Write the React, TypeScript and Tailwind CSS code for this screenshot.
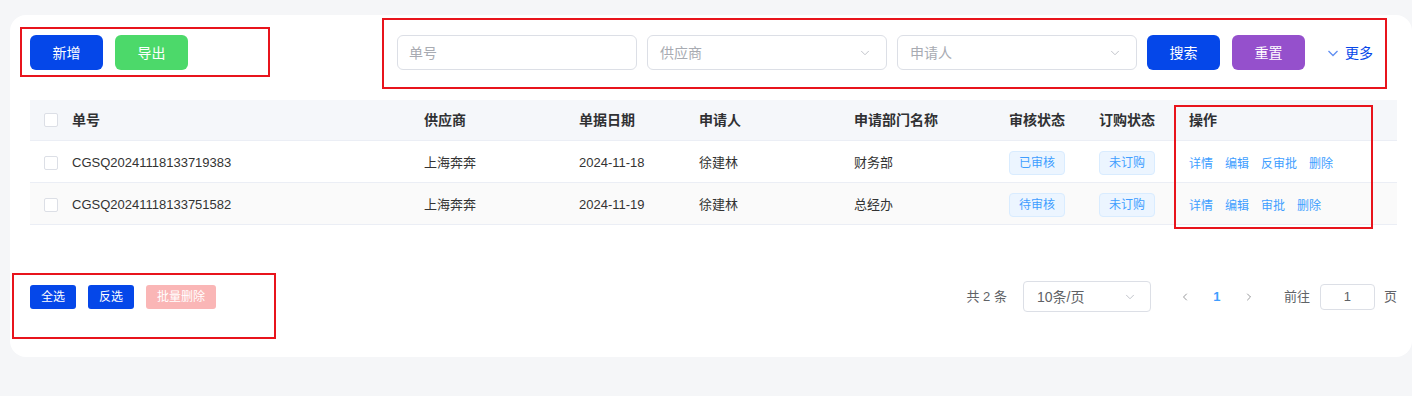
import { ChevronDown, ChevronLeft, ChevronRight } from "lucide-react";

const rows = [
  { no: "CGSQ20241118133719383", supplier: "上海奔奔", date: "2024-11-18", user: "徐建林", dept: "财务部", audit: "已审核", order: "未订购", ops: ["详情", "编辑", "反审批", "删除"] },
  { no: "CGSQ20241118133751582", supplier: "上海奔奔", date: "2024-11-19", user: "徐建林", dept: "总经办", audit: "待审核", order: "未订购", ops: ["详情", "编辑", "审批", "删除"] },
];

const cols = "grid grid-cols-[42px_352px_155px_120px_155px_155px_90px_90px_1fr] items-center";

const Checkbox = () => (
  <span className="ml-[14px] block h-[14px] w-[14px] rounded-[2px] border border-[#dcdfe6] bg-white" />
);

const Tag = ({ text }: { text: string }) => (
  <span className="flex h-6 w-14 items-center justify-center rounded border border-[#d9ecff] bg-[#ecf5ff] text-xs text-[#409eff]">
    {text}
  </span>
);

const SelectBox = ({ placeholder }: { placeholder: string }) => (
  <div className="flex h-[35px] w-[240px] items-center justify-between rounded-md border border-[#dcdfe6] bg-white pl-3 pr-[14px] text-sm text-[#a8abb2]">
    <span>{placeholder}</span>
    <ChevronDown className="h-[14px] w-[14px] text-[#b8bbc2]" strokeWidth={1.5} />
  </div>
);

export default function App() {
  return (
    <div className="relative h-[396px] w-full overflow-hidden bg-[#f5f6f8] pl-[10px] pt-[15px] font-['Liberation_Sans','Noto_Sans_CJK_SC',sans-serif]">
      <div className="rounded-2xl bg-white pb-[45px] pl-5 pr-[15px] pt-5">
        {/* Toolbar */}
        <div className="flex items-center justify-between">
          <div className="flex gap-3">
            <button className="h-[35px] w-[73px] rounded-md bg-[#0547e9] text-sm text-white">新增</button>
            <button className="h-[35px] w-[73px] rounded-md bg-[#4cd96a] text-sm text-white">导出</button>
          </div>
          <div className="mr-6 flex items-center">
            <div className="flex h-[35px] w-[240px] items-center rounded-md border border-[#dcdfe6] bg-white pl-[11px] text-sm text-[#a8abb2]">
              单号
            </div>
            <div className="ml-[10px]"><SelectBox placeholder="供应商" /></div>
            <div className="ml-[10px]"><SelectBox placeholder="申请人" /></div>
            <button className="ml-[10px] h-[35px] w-[73px] rounded-md bg-[#0547e9] text-sm text-white">搜索</button>
            <button className="ml-3 h-[35px] w-[73px] rounded-md bg-[#9550cc] text-sm text-white">重置</button>
            <button className="ml-[22px] flex items-center gap-[6px] text-sm text-[#0547e9]">
              <svg width="12" height="12" viewBox="0 0 12 12" fill="none" stroke="#5f8ef2" strokeWidth="1.3">
                <polyline points="1.5,4 6,8.5 10.5,4" />
              </svg>
              更多
            </button>
          </div>
        </div>

        {/* Table */}
        <div className="mt-[30px] text-[13px] text-[#333]">
          <div className={`${cols} h-[41px] border-b border-[#ebeef5] bg-[#f5f7fa] text-sm font-bold text-[#303133]`}>
            <Checkbox />
            <span>单号</span>
            <span>供应商</span>
            <span>单据日期</span>
            <span>申请人</span>
            <span>申请部门名称</span>
            <span>审核状态</span>
            <span>订购状态</span>
            <span>操作</span>
          </div>
          {rows.map((r, i) => (
            <div
              key={r.no}
              className={`${cols} h-[42px] border-b border-[#ebeef5] pt-[2px] ${i % 2 === 1 ? "bg-[#fafafa]" : "bg-white"}`}
            >
              <Checkbox />
              <span>{r.no}</span>
              <span>{r.supplier}</span>
              <span>{r.date}</span>
              <span>{r.user}</span>
              <span>{r.dept}</span>
              <span><Tag text={r.audit} /></span>
              <span><Tag text={r.order} /></span>
              <span className="flex gap-3 pt-[2px] text-xs text-[#409eff]">
                {r.ops.map((op) => (
                  <button key={op}>{op}</button>
                ))}
              </span>
            </div>
          ))}
        </div>

        {/* Footer */}
        <div className="mt-[56px] flex h-[31px] items-center justify-between">
          <div className="flex gap-3">
            <button className="h-6 rounded-[3px] bg-[#0547e9] px-[11px] text-xs text-white">全选</button>
            <button className="h-6 rounded-[3px] bg-[#0547e9] px-[11px] text-xs text-white">反选</button>
            <button className="h-6 rounded-[3px] bg-[#fab6b6] px-[11px] text-xs text-white">批量删除</button>
          </div>
          <div className="flex items-center text-[13px] text-[#606266]">
            <span className="mr-4">共 2 条</span>
            <div className="flex h-[31px] w-[128px] items-center justify-between rounded border border-[#dcdfe6] pl-[13px] pr-[13px] text-sm">
              <span>10条/页</span>
              <ChevronDown className="h-[14px] w-[14px] text-[#b8bbc2]" strokeWidth={1.5} />
            </div>
            <div className="ml-[18px] flex items-center">
              <span className="flex w-8 justify-center text-[#606266]">
                <ChevronLeft className="h-3 w-3" strokeWidth={1.3} />
              </span>
              <span className="w-8 text-center font-bold text-[#409eff]">1</span>
              <span className="flex w-8 justify-center text-[#606266]">
                <ChevronRight className="h-3 w-3" strokeWidth={1.3} />
              </span>
            </div>
            <span className="ml-[19px]">前往</span>
            <div className="ml-[10px] flex h-[26px] w-[55px] items-center justify-center rounded border border-[#dcdfe6] text-[#606266]">
              1
            </div>
            <span className="ml-[9px]">页</span>
          </div>
        </div>
      </div>

      {/* annotation boxes */}
      <div className="pointer-events-none absolute left-[20px] top-[27px] h-[50px] w-[250px] border-2 border-[#e8141c]" />
      <div className="pointer-events-none absolute left-[382px] top-[18px] h-[71px] w-[1005px] border-2 border-[#e8141c]" />
      <div className="pointer-events-none absolute left-[1174px] top-[105px] h-[124px] w-[199px] border-2 border-[#e8141c]" />
      <div className="pointer-events-none absolute left-[12px] top-[273px] h-[66px] w-[264px] border-2 border-[#e8141c]" />
    </div>
  );
}
